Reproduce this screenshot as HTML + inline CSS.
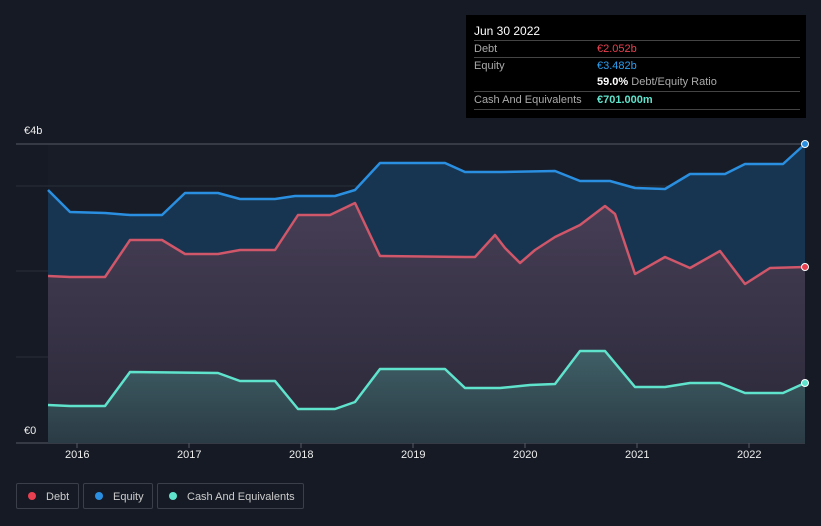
<!DOCTYPE html><html><head><style>
body{margin:0;width:821px;height:526px;background:#151a24;font-family:"Liberation Sans",sans-serif;overflow:hidden;position:relative}
.tt{position:absolute;left:466px;top:15px;width:340px;height:103px;background:#000;color:#fff;font-size:11px}
.tt .r{position:absolute;left:8px;right:6px;height:17px;border-top:1px solid #444;line-height:17px}
.g{color:#aaa}
.leg{position:absolute;top:483px;height:26px;border:1px solid #3a3f4a;border-radius:2px;color:#ccc;font-size:11px;line-height:26px;box-sizing:border-box}
.leg i{display:inline-block;width:8px;height:8px;border-radius:50%;margin:0 10px 0 11px;vertical-align:-0px}
.xl{position:absolute;top:449px;color:#eee;font-size:11px}
</style></head><body>
<svg width="821" height="526" style="position:absolute;left:0;top:0">
<rect x="48" y="144" width="757" height="299" fill="#171c27"/>
<g stroke="#2a2f3a" stroke-width="1"><line x1="16" y1="144" x2="805" y2="144" stroke="#555a63"/><line x1="16" y1="186" x2="805" y2="186"/><line x1="16" y1="271" x2="805" y2="271"/><line x1="16" y1="357" x2="805" y2="357"/><line x1="16" y1="443" x2="805" y2="443" stroke="#555a63"/></g>
<defs><linearGradient id="dg" x1="0" y1="0" x2="0" y2="1"><stop offset="0" stop-color="#463e55"/><stop offset="1" stop-color="#2a2838"/></linearGradient>
<linearGradient id="cg" x1="0" y1="0" x2="0" y2="1"><stop offset="0" stop-color="#3f5f66"/><stop offset="1" stop-color="#2b3b45"/></linearGradient></defs>
<polygon fill="#173550" points="48,190 70,212 105,213 130,215 162,215 185,193 218,193 240,199 275,199 295,196 335,196 355,190 380,163 445,163 465,172 500,172 555,171 580,181 610,181 635,188 665,189 690,174 725,174 745,164 783,164 805,144 805,443 48,443"/>
<polygon fill="url(#dg)" points="48,276 70,277 105,277 130,240 162,240 185,254 218,254 240,250 275,250 298,215 330,215 355,203 380,256 465,257 475,257 495,235 505,248 520,263 535,250 555,237 580,225 605,206 615,214 635,274 665,257 690,268 720,251 745,284 770,268 805,267 805,443 48,443"/>
<polygon fill="url(#cg)" points="48,405 70,406 105,406 130,372 218,373 240,381 275,381 298,409 335,409 355,402 380,369 445,369 465,388 500,388 530,385 555,384 580,351 605,351 635,387 665,387 690,383 720,383 745,393 783,393 805,383 805,443 48,443"/>
<g fill="none" stroke-width="2.5" stroke-linejoin="round">
<polyline stroke="#2a8fe0" points="48,190 70,212 105,213 130,215 162,215 185,193 218,193 240,199 275,199 295,196 335,196 355,190 380,163 445,163 465,172 500,172 555,171 580,181 610,181 635,188 665,189 690,174 725,174 745,164 783,164 805,144"/>
<polyline stroke="#d0566a" points="48,276 70,277 105,277 130,240 162,240 185,254 218,254 240,250 275,250 298,215 330,215 355,203 380,256 465,257 475,257 495,235 505,248 520,263 535,250 555,237 580,225 605,206 615,214 635,274 665,257 690,268 720,251 745,284 770,268 805,267"/>
<polyline stroke="#5fe3cc" points="48,405 70,406 105,406 130,372 218,373 240,381 275,381 298,409 335,409 355,402 380,369 445,369 465,388 500,388 530,385 555,384 580,351 605,351 635,387 665,387 690,383 720,383 745,393 783,393 805,383"/>
</g>
<circle cx="805" cy="144" r="3.5" fill="#2a8fe0" stroke="#fff" stroke-width="1"/>
<circle cx="805" cy="267" r="3.5" fill="#e84050" stroke="#fff" stroke-width="1"/>
<circle cx="805" cy="383" r="3.5" fill="#5fe3cc" stroke="#fff" stroke-width="1"/>
<g stroke="#555a63"><line x1="77" y1="443" x2="77" y2="448"/><line x1="189" y1="443" x2="189" y2="448"/><line x1="301" y1="443" x2="301" y2="448"/><line x1="413" y1="443" x2="413" y2="448"/><line x1="525" y1="443" x2="525" y2="448"/><line x1="637" y1="443" x2="637" y2="448"/><line x1="749" y1="443" x2="749" y2="448"/></g>
</svg>
<div style="position:absolute;left:24px;top:125px;color:#eee;font-size:11px">€4b</div>
<div style="position:absolute;left:24px;top:425px;color:#eee;font-size:11px">€0</div>
<div class="xl" style="left:65px">2016</div><div class="xl" style="left:177px">2017</div><div class="xl" style="left:289px">2018</div><div class="xl" style="left:401px">2019</div><div class="xl" style="left:513px">2020</div><div class="xl" style="left:625px">2021</div><div class="xl" style="left:737px">2022</div>
<div class="tt">
<div style="position:absolute;left:8px;top:9px;font-size:12px">Jun 30 2022</div>
<div class="r" style="top:25px"><span class="g">Debt</span><span style="position:absolute;left:123px;color:#e84050">€2.052b</span></div>
<div class="r" style="top:42px"><span class="g">Equity</span><span style="position:absolute;left:123px;color:#2a9ff0">€3.482b</span></div>
<div class="r" style="top:59px;border-top:none"><span style="position:absolute;left:123px"><b>59.0%</b> <span class="g">Debt/Equity Ratio</span></span></div>
<div class="r" style="top:76px;border-bottom:1px solid #444"><span class="g">Cash And Equivalents</span><span style="position:absolute;left:123px;color:#5fe3cc;font-weight:bold">€701.000m</span></div>
</div>
<div class="leg" style="left:16px;width:63px"><i style="background:#e84050"></i>Debt</div>
<div class="leg" style="left:83px;width:70px"><i style="background:#2a8fe0"></i>Equity</div>
<div class="leg" style="left:157px;width:147px"><i style="background:#5fe3cc"></i>Cash And Equivalents</div>
</body></html>
